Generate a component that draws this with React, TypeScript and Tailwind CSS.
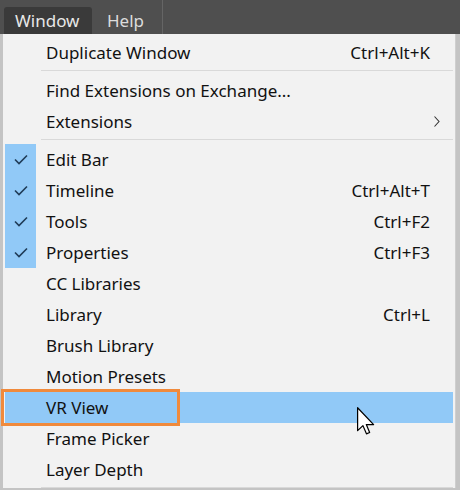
import React from "react";

type Item = { label: string; shortcut?: string; checked?: boolean; sub?: boolean; hover?: boolean };

const groups: Item[][] = [
  [{ label: "Duplicate Window", shortcut: "Ctrl+Alt+K" }],
  [
    { label: "Find Extensions on Exchange..." },
    { label: "Extensions", sub: true },
  ],
  [
    { label: "Edit Bar", checked: true },
    { label: "Timeline", shortcut: "Ctrl+Alt+T", checked: true },
    { label: "Tools", shortcut: "Ctrl+F2", checked: true },
    { label: "Properties", shortcut: "Ctrl+F3", checked: true },
    { label: "CC Libraries" },
    { label: "Library", shortcut: "Ctrl+L" },
    { label: "Brush Library" },
    { label: "Motion Presets" },
    { label: "VR View", hover: true },
    { label: "Frame Picker" },
    { label: "Layer Depth" },
  ],
];

function Check() {
  return (
    <svg width="14" height="11" viewBox="0 0 14 11" fill="none">
      <path d="M1 5.5 L5 9.5 L13 1.5" stroke="#1f3b57" strokeWidth="1.6" />
    </svg>
  );
}

function Row({ item }: { item: Item }) {
  return (
    <div
      className={`relative flex h-[31px] items-center ${item.hover ? "bg-[#91c9f7]" : ""}`}
    >
      <div
        className={`flex h-full w-[31px] items-center justify-center ${item.checked ? "bg-[#91c9f7]" : ""}`}
      >
        {item.checked && <Check />}
      </div>
      <div className="ml-[10px] flex-1 text-[#111]">{item.label}</div>
      {item.shortcut && <div className="mr-[23px] text-[#111]">{item.shortcut}</div>}
      {item.sub && (
        <svg className="mr-[13px]" width="6" height="11" viewBox="0 0 6 11" fill="none">
          <path d="M0.5 0.5 L5 5.5 L0.5 10.5" stroke="#333" strokeWidth="1.1" />
        </svg>
      )}
      {item.hover && (
        <div className="pointer-events-none absolute left-[-4px] top-[-3px] h-[37px] w-[179px] border-[3px] border-[#f08a3c]" />
      )}
    </div>
  );
}

export default function App() {
  return (
    <div
      className="relative h-[490px] w-[460px] overflow-hidden bg-[#c4c4c4] text-[17px]"
      style={{ fontFamily: '"Noto Sans", "Open Sans", sans-serif' }}
    >
      <div className="flex h-[34px] items-end bg-[#4f4f4f]">
        <div className="ml-[4px] flex h-[27px] w-[88px] items-center rounded-t-[3px] bg-[#3a3a3a] pl-[11px] text-[#e8e8e8]">
          Window
        </div>
        <div className="ml-[15px] flex h-[27px] items-center text-[#dcdcdc]">Help</div>
        <div className="ml-[18px] h-[34px] w-px bg-[#656565]" />
      </div>
      <div className="ml-[3px] w-[453px] border-r border-[#cfcfcf] bg-[#f2f2f2] px-[2px] pt-[3px]">
        {groups.map((g, gi) => (
          <div key={gi}>
            {gi > 0 && (
              <div className="pb-[4px] pl-[36px] pt-[2px]">
                <div className="h-px bg-[#d9d9d9]" />
              </div>
            )}
            {g.map((it) => (
              <Row key={it.label} item={it} />
            ))}
          </div>
        ))}
        <div className="pl-[36px] pt-[2px]">
          <div className="h-px bg-[#d9d9d9]" />
        </div>
      </div>
      <svg
        className="absolute left-[356px] top-[407px]"
        width="20"
        height="29"
        viewBox="0 0 12 19"
        fill="none"
      >
        <path
          d="M0.5 0.5 L0.5 15.5 L4 12.2 L6.3 17.6 L8.4 16.7 L6.2 11.5 L11 11.5 Z"
          fill="#fff"
          stroke="#000"
          strokeWidth="0.8"
          strokeLinejoin="round"
        />
      </svg>
    </div>
  );
}
